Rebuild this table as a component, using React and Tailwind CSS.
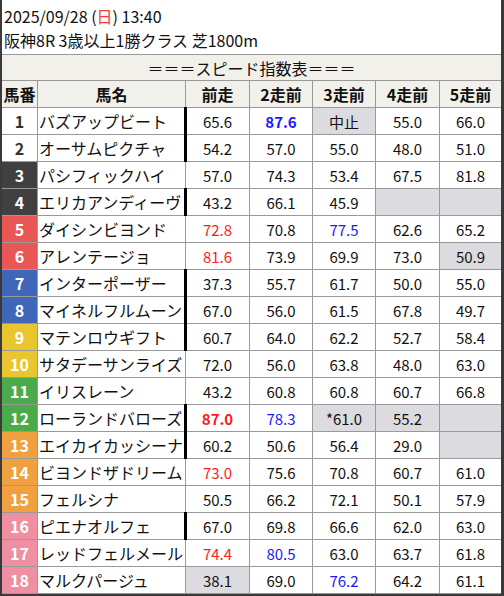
import React from 'react';

const frames = {
  1: 'bg-white text-[#333]',
  2: 'bg-white text-[#333]',
  3: 'bg-[#404040] text-white',
  4: 'bg-[#404040] text-white',
  5: 'bg-[#e85656] text-white',
  6: 'bg-[#e85656] text-white',
  7: 'bg-[#3f67b9] text-white',
  8: 'bg-[#3f67b9] text-white',
  9: 'bg-[#e9c62f] text-white',
  10: 'bg-[#e9c62f] text-white',
  11: 'bg-[#4bab4b] text-white',
  12: 'bg-[#4bab4b] text-white',
  13: 'bg-[#f0a03f] text-white',
  14: 'bg-[#f0a03f] text-white',
  15: 'bg-[#f0a03f] text-white',
  16: 'bg-[#f08ea2] text-white',
  17: 'bg-[#f08ea2] text-white',
  18: 'bg-[#f08ea2] text-white',
};

const rows = [
  [1, 'バズアップビート', true, ['65.6', 'B:87.6', 'g:中止', '55.0', '66.0']],
  [2, 'オーサムピクチャ', true, ['54.2', '57.0', '55.0', '48.0', '51.0']],
  [3, 'パシフィックハイ', false, ['57.0', '74.3', '53.4', '67.5', '81.8']],
  [4, 'エリカアンディーヴ', true, ['43.2', '66.1', '45.9', 'g:', 'g:']],
  [5, 'ダイシンビヨンド', false, ['r:72.8', '70.8', 'b:77.5', '62.6', '65.2']],
  [6, 'アレンテージョ', false, ['r:81.6', '73.9', '69.9', '73.0', 'g:50.9']],
  [7, 'インターポーザー', true, ['37.3', '55.7', '61.7', '50.0', '55.0']],
  [8, 'マイネルフルムーン', true, ['67.0', '56.0', '61.5', '67.8', '49.7']],
  [9, 'マテンロウギフト', true, ['60.7', '64.0', '62.2', '52.7', '58.4']],
  [10, 'サタデーサンライズ', false, ['72.0', '56.0', '63.8', '48.0', '63.0']],
  [11, 'イリスレーン', false, ['43.2', '60.8', '60.8', '60.7', '66.8']],
  [12, 'ローランドバローズ', true, ['R:87.0', 'b:78.3', 'g:*61.0', 'g:55.2', 'g:']],
  [13, 'エイカイカッシーナ', true, ['60.2', '50.6', '56.4', '29.0', 'g:']],
  [14, 'ビヨンドザドリーム', false, ['r:73.0', '75.6', '70.8', '60.7', '61.0']],
  [15, 'フェルシナ', false, ['50.5', '66.2', '72.1', '50.1', '57.9']],
  [16, 'ピエナオルフェ', true, ['67.0', '69.8', '66.6', '62.0', '63.0']],
  [17, 'レッドフェルメール', false, ['r:74.4', 'b:80.5', '63.0', '63.7', '61.8']],
  [18, 'マルクパージュ', false, ['g:38.1', '69.0', 'b:76.2', '64.2', '61.1']],
];

function Val({ s }) {
  let cls = 'bg-white text-[#111]';
  let t = s;
  if (s.startsWith('B:')) { cls = 'bg-white text-[#1a1aff] font-bold'; t = s.slice(2); }
  else if (s.startsWith('R:')) { cls = 'bg-white text-[#ff1a1a] font-bold'; t = s.slice(2); }
  else if (s.startsWith('r:')) { cls = 'bg-white text-[#ff1a1a]'; t = s.slice(2); }
  else if (s.startsWith('b:')) { cls = 'bg-white text-[#1a1aff]'; t = s.slice(2); }
  else if (s.startsWith('g:')) { cls = 'bg-[#dcdce0] text-[#111]'; t = s.slice(2); }
  return (
    <div className={`${cls} flex items-center justify-center text-[15px] leading-none`}>{t}</div>
  );
}

export default function App() {
  return (
    <div
      className="w-[504px] h-[596px] bg-white border-l-2 border-r-[3px] border-b-2 border-[#3a3a3a] flex flex-col text-[#111]"
      style={{ fontFamily: "'Noto Sans CJK JP', 'Noto Sans', sans-serif" }}
    >
      <div className="h-[55px] border-b border-[#999] pl-[2px] pt-[4px] text-[16px] leading-[24px]">
        <div>2025/09/28 (<span className="text-[#f03c3c]">日</span>) 13:40</div>
        <div>阪神8R 3歳以上1勝クラス 芝1800m</div>
      </div>
      <div className="grid grid-cols-[35px_147px_63px_62px_62px_63px_61px] grid-rows-[25px_26px_repeat(18,26px)] gap-px bg-[#999] border-b border-[#999]">
        <div className="col-span-7 bg-[#f1f0eb] flex items-center justify-center text-[16px] leading-none">＝＝＝スピード指数表＝＝＝</div>
        {['馬番', '馬名', '前走', '2走前', '3走前', '4走前', '5走前'].map((h) => (
          <div key={h} className="bg-[#f1f0eb] flex items-center justify-center font-bold text-[16px] leading-none">{h}</div>
        ))}
        {rows.map(([n, name, bar, vals]) => (
          <React.Fragment key={n}>
            <div className={`${frames[n]} flex items-center justify-center font-bold text-[16px] leading-none`}>{n}</div>
            <div className="relative bg-white flex items-center pl-[1px] text-[16px] leading-none whitespace-nowrap">
              {name}
              {bar && <span className="absolute right-[-2px] top-[-1px] bottom-[-1px] w-[3px] bg-black"></span>}
            </div>
            {vals.map((v, i) => (
              <Val key={i} s={v} />
            ))}
          </React.Fragment>
        ))}
      </div>
    </div>
  );
}
